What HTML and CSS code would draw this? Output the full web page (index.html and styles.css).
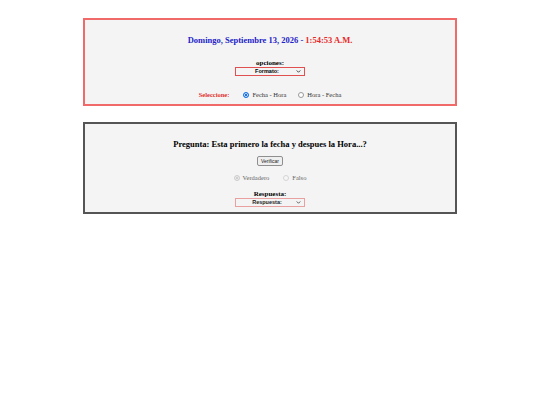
FILE: index.html
```html
<!DOCTYPE html>
<html lang="es">
<head>
<meta charset="utf-8">
<link rel="stylesheet" href="styles.css">
</head>
<body>
<div class="page">
  <section class="card card-red">
    <h1 class="fecha"><span class="dia">Domingo, Septiembre 13, 2026</span> <span class="sep">-</span> <span class="hora">1:54:53 A.M.</span></h1>
    <div class="field">
      <label class="lbl">opciones:</label>
      <span class="sel-wrap">
        <select class="sel"><option>Formato:</option></select>
        <svg class="arrow" viewBox="0 0 6 4" width="5" height="3"><path d="M0.6 0.6 L3 3 L5.4 0.6" fill="none" stroke="#222" stroke-width="1.1"/></svg>
      </span>
    </div>
    <div class="row">
      <span class="sel-lbl">Seleccione:</span>
      <label class="opt"><input type="radio" name="f" checked> Fecha - Hora</label>
      <label class="opt"><input type="radio" name="f"> Hora - Fecha</label>
    </div>
  </section>
  <section class="card card-gray">
    <h2 class="pregunta">Pregunta: Esta primero la fecha y despues la Hora...?</h2>
    <button class="btn">Verificar</button>
    <div class="row row-q">
      <label class="opt dis"><input type="radio" name="q" checked disabled> Verdadero</label>
      <label class="opt dis"><input type="radio" name="q" disabled> Falso</label>
    </div>
    <div class="field">
      <label class="lbl">Respuesta:</label>
      <span class="sel-wrap">
        <select class="sel sel-light"><option>Respuesta:</option></select>
        <svg class="arrow" viewBox="0 0 6 4" width="5" height="3"><path d="M0.6 0.6 L3 3 L5.4 0.6" fill="none" stroke="#444" stroke-width="1.1"/></svg>
      </span>
    </div>
  </section>
</div>
</body>
</html>
```
FILE: styles.css
```css
html, body { margin: 0; padding: 0; background: #fff; }
body { font-family: "Liberation Serif", "Times New Roman", serif; }
.page {
  display: flex;
  flex-direction: column;
  align-items: center;
  padding-top: 18px;
  gap: 16px;
}
.card {
  box-sizing: border-box;
  width: 374px;
  background: #f4f4f4;
  display: flex;
  flex-direction: column;
  align-items: center;
}
.card-red { border: 2px solid #f06a6a; height: 88px; padding-top: 14px; }
.card-gray { border: 2px solid #555; height: 92px; padding-top: 14px; }
.fecha {
  margin: 0;
  font-size: 8.5px;
  font-weight: bold;
  line-height: 12px;
}
.dia { color: #2323c8; }
.sep { color: #2323c8; }
.hora { color: #e82828; }
.field {
  display: flex;
  flex-direction: column;
  align-items: center;
  margin-top: 13px;
}
.lbl { font-size: 7px; font-weight: bold; line-height: 8px; color: #000; }
.sel-wrap { position: relative; display: block; width: 70px; height: 9px; }
.sel {
  box-sizing: border-box;
  display: block;
  width: 70px;
  height: 9px;
  -webkit-appearance: none;
  appearance: none;
  font-family: "Liberation Sans", Arial, sans-serif;
  font-size: 5.5px;
  font-weight: bold;
  text-align: center;
  text-align-last: center;
  border: 1px solid #e05050;
  border-radius: 0;
  background: #f4f4f4;
  padding: 0 6px 0 0;
  line-height: 7px;
  color: #000;
  margin: 0;
}
.sel-light { border-color: #e8a0a0; color: #222; }
.arrow { position: absolute; right: 4px; top: 3px; pointer-events: none; }
.row {
  display: flex;
  align-items: center;
  gap: 12px;
  margin-top: 15px;
  font-size: 6.5px;
  line-height: 8px;
}
.sel-lbl { color: #e03030; font-weight: bold; margin-right: 2px; }
.opt { display: flex; align-items: center; gap: 3px; color: #333; }
.opt input {
  -webkit-appearance: none;
  appearance: none;
  box-sizing: border-box;
  width: 6px; height: 6px; margin: 0;
  border: 0.8px solid #9a9a9a;
  border-radius: 50%;
  background: #fff;
}
.opt input:checked {
  border-color: #1a73e8;
  background: #1a73e8;
  box-shadow: inset 0 0 0 0.8px #fff;
}
.opt input:disabled {
  border-color: #d4d4d4;
  background: #f6f6f6;
  box-shadow: none;
}
.opt input:disabled:checked {
  background: #cfcfcf;
  border-color: #cfcfcf;
  box-shadow: inset 0 0 0 0.8px #f4f4f4;
}
.dis { color: #666; }
.pregunta {
  margin: 0;
  font-size: 8.5px;
  font-weight: bold;
  line-height: 12px;
  color: #000;
}
.btn {
  margin-top: 6px;
  font-family: "Liberation Sans", Arial, sans-serif;
  font-size: 5px;
  padding: 1px 3px;
  height: 10px;
  line-height: 6px;
  border: 1px solid #8f8f8f;
  border-radius: 2px;
  background: #efefef;
  color: #222;
}
.row-q { margin-top: 8px; gap: 14px; }
.card-gray .field { margin-top: 8px; }
```
